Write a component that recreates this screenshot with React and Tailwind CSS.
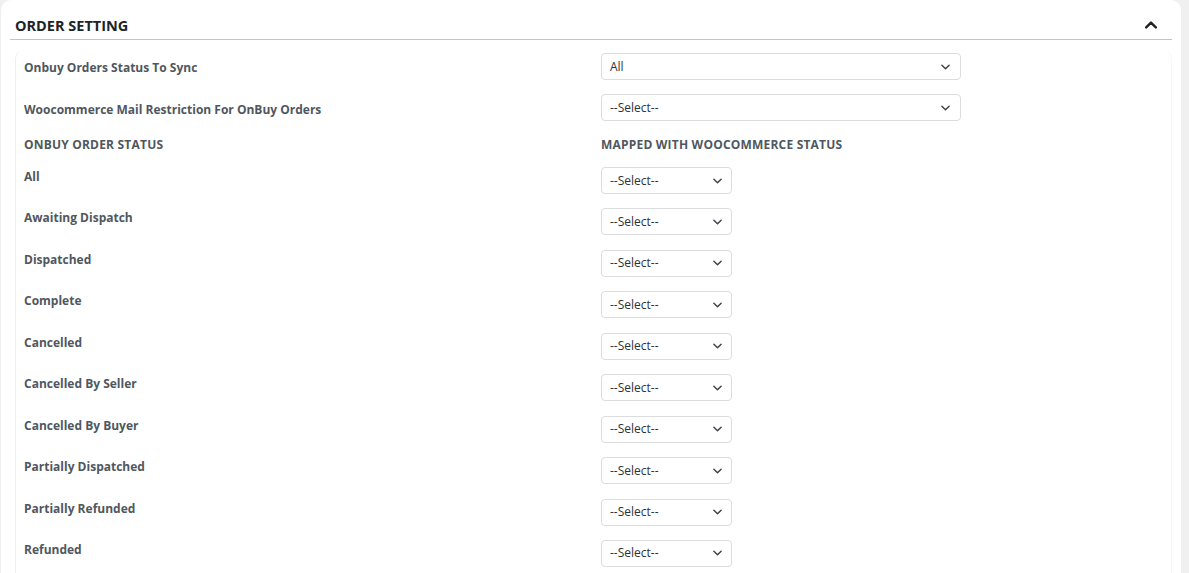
import React from "react";

const statuses = [
  "All",
  "Awaiting Dispatch",
  "Dispatched",
  "Complete",
  "Cancelled",
  "Cancelled By Seller",
  "Cancelled By Buyer",
  "Partially Dispatched",
  "Partially Refunded",
  "Refunded",
];

const Chevron = ({ up = false, className = "" }) => (
  <svg
    viewBox="0 0 10 6"
    className={className}
    fill="none"
    stroke="currentColor"
    strokeLinecap="round"
    strokeLinejoin="round"
  >
    {up ? <path d="M1 5 L5 1 L9 5" /> : <path d="M1 1 L5 5 L9 1" />}
  </svg>
);

const FakeSelect = ({ value, wide }) => (
  <div
    className={`flex items-center justify-between h-[27px] rounded-[4px] border border-[#dcdcde] bg-white pl-[8px] ${
      wide ? "w-[360px] pr-[10px]" : "w-[131px] pr-[9px]"
    }`}
  >
    <span className="text-[12px] text-[#2c3338] leading-none">{value}</span>
    <Chevron className="w-[9px] h-[6px] text-[#3c434a] stroke-[1.6]" />
  </div>
);

const App = () => {
  return (
    <div
      className="min-h-screen bg-[#f0f0f1] overflow-hidden"
      style={{ fontFamily: '"Open Sans", "Noto Sans", sans-serif' }}
    >
      <div className="ml-[1px] w-[1180px] h-[590px] bg-white rounded-[10px] px-[9px]">
        <div className="flex items-center justify-between h-[40px] pl-[5px] pr-[15px] border-b border-[#c3c4c7]">
          <h2 className="text-[14.5px] font-bold text-[#1d2327] pt-[12px]">ORDER SETTING</h2>
          <Chevron up className="w-[12px] h-[8px] text-[#1d2327] stroke-[2] mt-[10px]" />
        </div>

        <div className="mt-[9px] ml-[5px] border border-[#f6f7f7] border-t-transparent border-l-[#efefef] rounded-[10px] pl-[8px] pt-[3px] h-[540px]">
          <div className="flex items-center h-[27px]">
            <div className="w-[577px] text-[12px] font-bold text-[#50575e] pt-[3px]">
              Onbuy Orders Status To Sync
            </div>
            <FakeSelect value="All" wide />
          </div>
          <div className="flex items-center h-[27px] mt-[14px]">
            <div className="w-[577px] text-[12px] font-bold text-[#50575e] pt-[5px]">
              Woocommerce Mail Restriction For OnBuy Orders
            </div>
            <FakeSelect value="--Select--" wide />
          </div>
          <div className="flex items-center h-[16px] mt-[16px] text-[12px] font-bold text-[#50575e] uppercase tracking-[0.2px]">
            <div className="w-[577px]">ONBUY ORDER STATUS</div>
            <div>MAPPED WITH WOOCOMMERCE STATUS</div>
          </div>
          <div className="mt-[14px]">
            {statuses.map((s) => (
              <div key={s} className="flex items-start h-[41.45px]">
                <div className="w-[577px] text-[12px] leading-[18px] pt-[1px] font-bold text-[#50575e]">
                  {s}
                </div>
                <FakeSelect value="--Select--" />
              </div>
            ))}
          </div>
        </div>
      </div>
    </div>
  );
};

export default App;
